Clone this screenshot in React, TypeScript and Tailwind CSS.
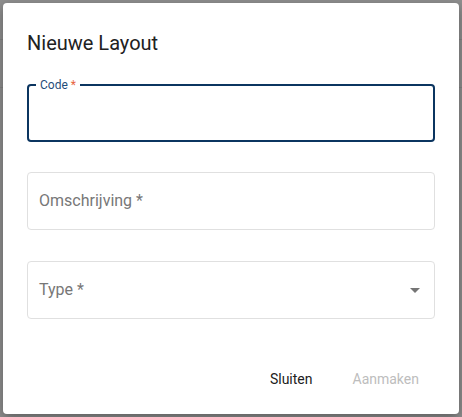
import { useState } from 'react';

function OutlinedField({ label }: { label: string }) {
  return (
    <div className="h-[58px] rounded-[4px] border border-[#e0e0e0] flex items-center px-[11px]">
      <span className="text-[16px] text-[#777777]">{label} *</span>
    </div>
  );
}

export default function App() {
  const [code, setCode] = useState('');

  return (
    <div
      className="relative w-[462px] h-[417px] bg-[#8f8f8f] overflow-hidden"
      style={{ fontFamily: 'Roboto, "Noto Sans", sans-serif' }}
    >
      {/* page behind the backdrop */}
      <div className="h-[40px] border-b border-[#838383]" />
      <div className="h-[48px] border-b border-[#838383]" />

      <div className="absolute inset-[3px] bg-white rounded-[4px] shadow-[0_4px_12px_rgba(0,0,0,0.35)] flex flex-col px-[24px] pt-[24px]">
        <h2 className="text-[20px] leading-[32px] font-normal text-[#212121]">Nieuwe Layout</h2>

        <div className="mt-[25px] relative h-[58px] rounded-[4px] border-2 border-[#0b3560]">
          <span className="absolute -top-[9px] left-[7px] px-[4px] bg-white text-[12px] leading-[16px] text-[#1f4d7a]">
            Code <span className="text-[#e8643f]">*</span>
          </span>
          <input
            value={code}
            onChange={(e) => setCode(e.target.value)}
            className="w-full h-full px-[12px] outline-none bg-transparent text-[16px]"
          />
        </div>

        <div className="mt-[30px]">
          <OutlinedField label="Omschrijving" />
        </div>

        <div className="mt-[31px] relative">
          <OutlinedField label="Type" />
          <svg className="absolute right-[15px] top-[27px]" width="10" height="5" viewBox="0 0 10 5">
            <path d="M0 0 L10 0 L5 5 Z" fill="#757575" />
          </svg>
        </div>

        <div className="flex justify-end gap-[8px] mt-[42px]">
          <button className="h-[36px] px-[16px] rounded-[4px] text-[14px] font-normal text-[#212121]">Sluiten</button>
          <button disabled className="h-[36px] px-[16px] rounded-[4px] text-[14px] font-normal text-[#bdbdbd]">
            Aanmaken
          </button>
        </div>
      </div>
    </div>
  );
}
